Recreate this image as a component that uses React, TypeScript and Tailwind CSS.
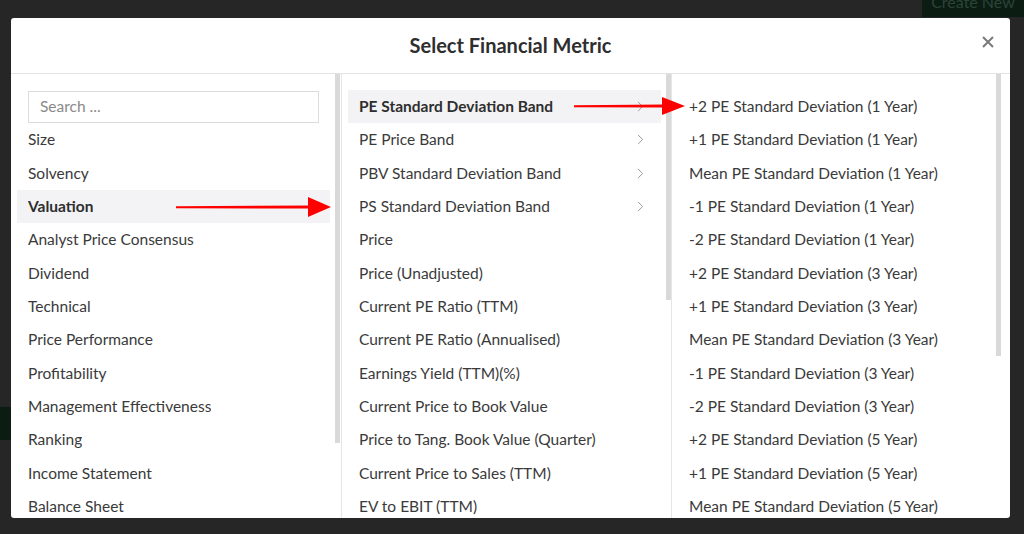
import { ChevronRight } from 'lucide-react'

type Row = { label: string; bold?: boolean; active?: boolean; more?: boolean }

const categories: Row[] = [
  { label: 'Size' },
  { label: 'Solvency' },
  { label: 'Valuation', bold: true, active: true },
  { label: 'Analyst Price Consensus' },
  { label: 'Dividend' },
  { label: 'Technical' },
  { label: 'Price Performance' },
  { label: 'Profitability' },
  { label: 'Management Effectiveness' },
  { label: 'Ranking' },
  { label: 'Income Statement' },
  { label: 'Balance Sheet' },
]

const valuation: Row[] = [
  { label: 'PE Standard Deviation Band', bold: true, active: true, more: true },
  { label: 'PE Price Band', more: true },
  { label: 'PBV Standard Deviation Band', more: true },
  { label: 'PS Standard Deviation Band', more: true },
  { label: 'Price' },
  { label: 'Price (Unadjusted)' },
  { label: 'Current PE Ratio (TTM)' },
  { label: 'Current PE Ratio (Annualised)' },
  { label: 'Earnings Yield (TTM)(%)' },
  { label: 'Current Price to Book Value' },
  { label: 'Price to Tang. Book Value (Quarter)' },
  { label: 'Current Price to Sales (TTM)' },
  { label: 'EV to EBIT (TTM)' },
]

const bands: Row[] = [
  '+2 PE Standard Deviation (1 Year)',
  '+1 PE Standard Deviation (1 Year)',
  'Mean PE Standard Deviation (1 Year)',
  '-1 PE Standard Deviation (1 Year)',
  '-2 PE Standard Deviation (1 Year)',
  '+2 PE Standard Deviation (3 Year)',
  '+1 PE Standard Deviation (3 Year)',
  'Mean PE Standard Deviation (3 Year)',
  '-1 PE Standard Deviation (3 Year)',
  '-2 PE Standard Deviation (3 Year)',
  '+2 PE Standard Deviation (5 Year)',
  '+1 PE Standard Deviation (5 Year)',
  'Mean PE Standard Deviation (5 Year)',
].map((label) => ({ label }))

function MetricRow({ row }: { row: Row }) {
  return (
    <div
      className={`flex h-[33.33px] shrink-0 items-center justify-between pl-[11px] pr-[12px] ${
        row.active ? 'bg-[#f3f3f5]' : ''
      }`}
    >
      <span className={`truncate ${row.bold ? 'font-bold text-[#2e2e2e]' : 'text-[#3a3a3a]'}`}>
        {row.label}
      </span>
      {row.more && <ChevronRight className="h-[17px] w-[17px] text-[#9a9a9a]" strokeWidth={1.4} />}
    </div>
  )
}

function Column({
  rows,
  width,
  thumb,
  search,
}: {
  rows: Row[]
  width: string
  thumb: string
  search?: boolean
}) {
  return (
    <div className={`flex h-full shrink-0 overflow-hidden border-r border-[#e6e6e6] pl-[6px] ${width}`}>
      <div className="flex w-[313px] shrink-0 flex-col pt-[16px]">
        {search && (
          <div className="flex h-[33.33px] shrink-0 items-center pl-[11px] pr-[11px]">
            <div className="flex h-[32px] w-full items-center border border-[#dcdcdc] px-[11px] text-[#8a8a8a]">
              Search ...
            </div>
          </div>
        )}
        {rows.map((r) => (
          <MetricRow key={r.label} row={r} />
        ))}
      </div>
      <div className="ml-[5px] w-[5px] shrink-0">
        <div className={`w-[5px] bg-[#d9d9d9] ${thumb}`} />
      </div>
    </div>
  )
}

export default function App() {
  return (
    <div
      className="relative h-[534px] w-full overflow-hidden bg-[#262626] pl-[11px] pt-[18px] text-[15.5px]"
      style={{ fontFamily: 'Lato, "Open Sans", sans-serif' }}
    >
      {/* page behind the overlay */}
      <div className="absolute right-0 top-0 flex h-[17px] w-[102px] items-start justify-center overflow-hidden bg-[#0b1c13]">
        <span className="-translate-y-[6px] text-[16px] leading-none text-[#2c4437]">Create New</span>
      </div>
      <div className="absolute left-0 top-[407px] h-[33px] w-[11px] bg-[#0b1c13]" />

      {/* dialog */}
      <div className="relative flex h-[500px] w-[999px] flex-col overflow-hidden rounded-[3px] bg-white">
        <div className="relative flex h-[56px] shrink-0 items-center justify-center border-b border-[#e3e3e3]">
          <h2 className="pb-[2px] text-[20px] font-bold text-[#2e2e2e]">Select Financial Metric</h2>
          <svg className="absolute right-[16px] top-[18px]" width="12" height="12" viewBox="0 0 12 12">
            <path d="M1 1L11 11M11 1L1 11" stroke="#7a7a7a" strokeWidth="2" />
          </svg>
        </div>
        <div className="flex min-h-0 flex-1">
          <Column rows={categories} width="w-[331px]" thumb="h-[369px]" search />
          <Column rows={valuation} width="w-[330px]" thumb="h-[226px]" />
          <Column rows={bands} width="w-[329px] border-r-0" thumb="h-[282px]" />
        </div>
      </div>

      {/* red annotation arrows */}
      <svg className="pointer-events-none absolute left-0 top-0" width="1024" height="534">
        <path d="M176 206.2L310 205.6L310 208.6L176 208.2Z" fill="#ff0000" />
        <polygon points="308,197 331,207 308,217" fill="#ff0000" />
        <path d="M574 105.2L664 104.6L664 107.6L574 107.2Z" fill="#ff0000" />
        <polygon points="662,97 685,106 662,115" fill="#ff0000" />
      </svg>
    </div>
  )
}
